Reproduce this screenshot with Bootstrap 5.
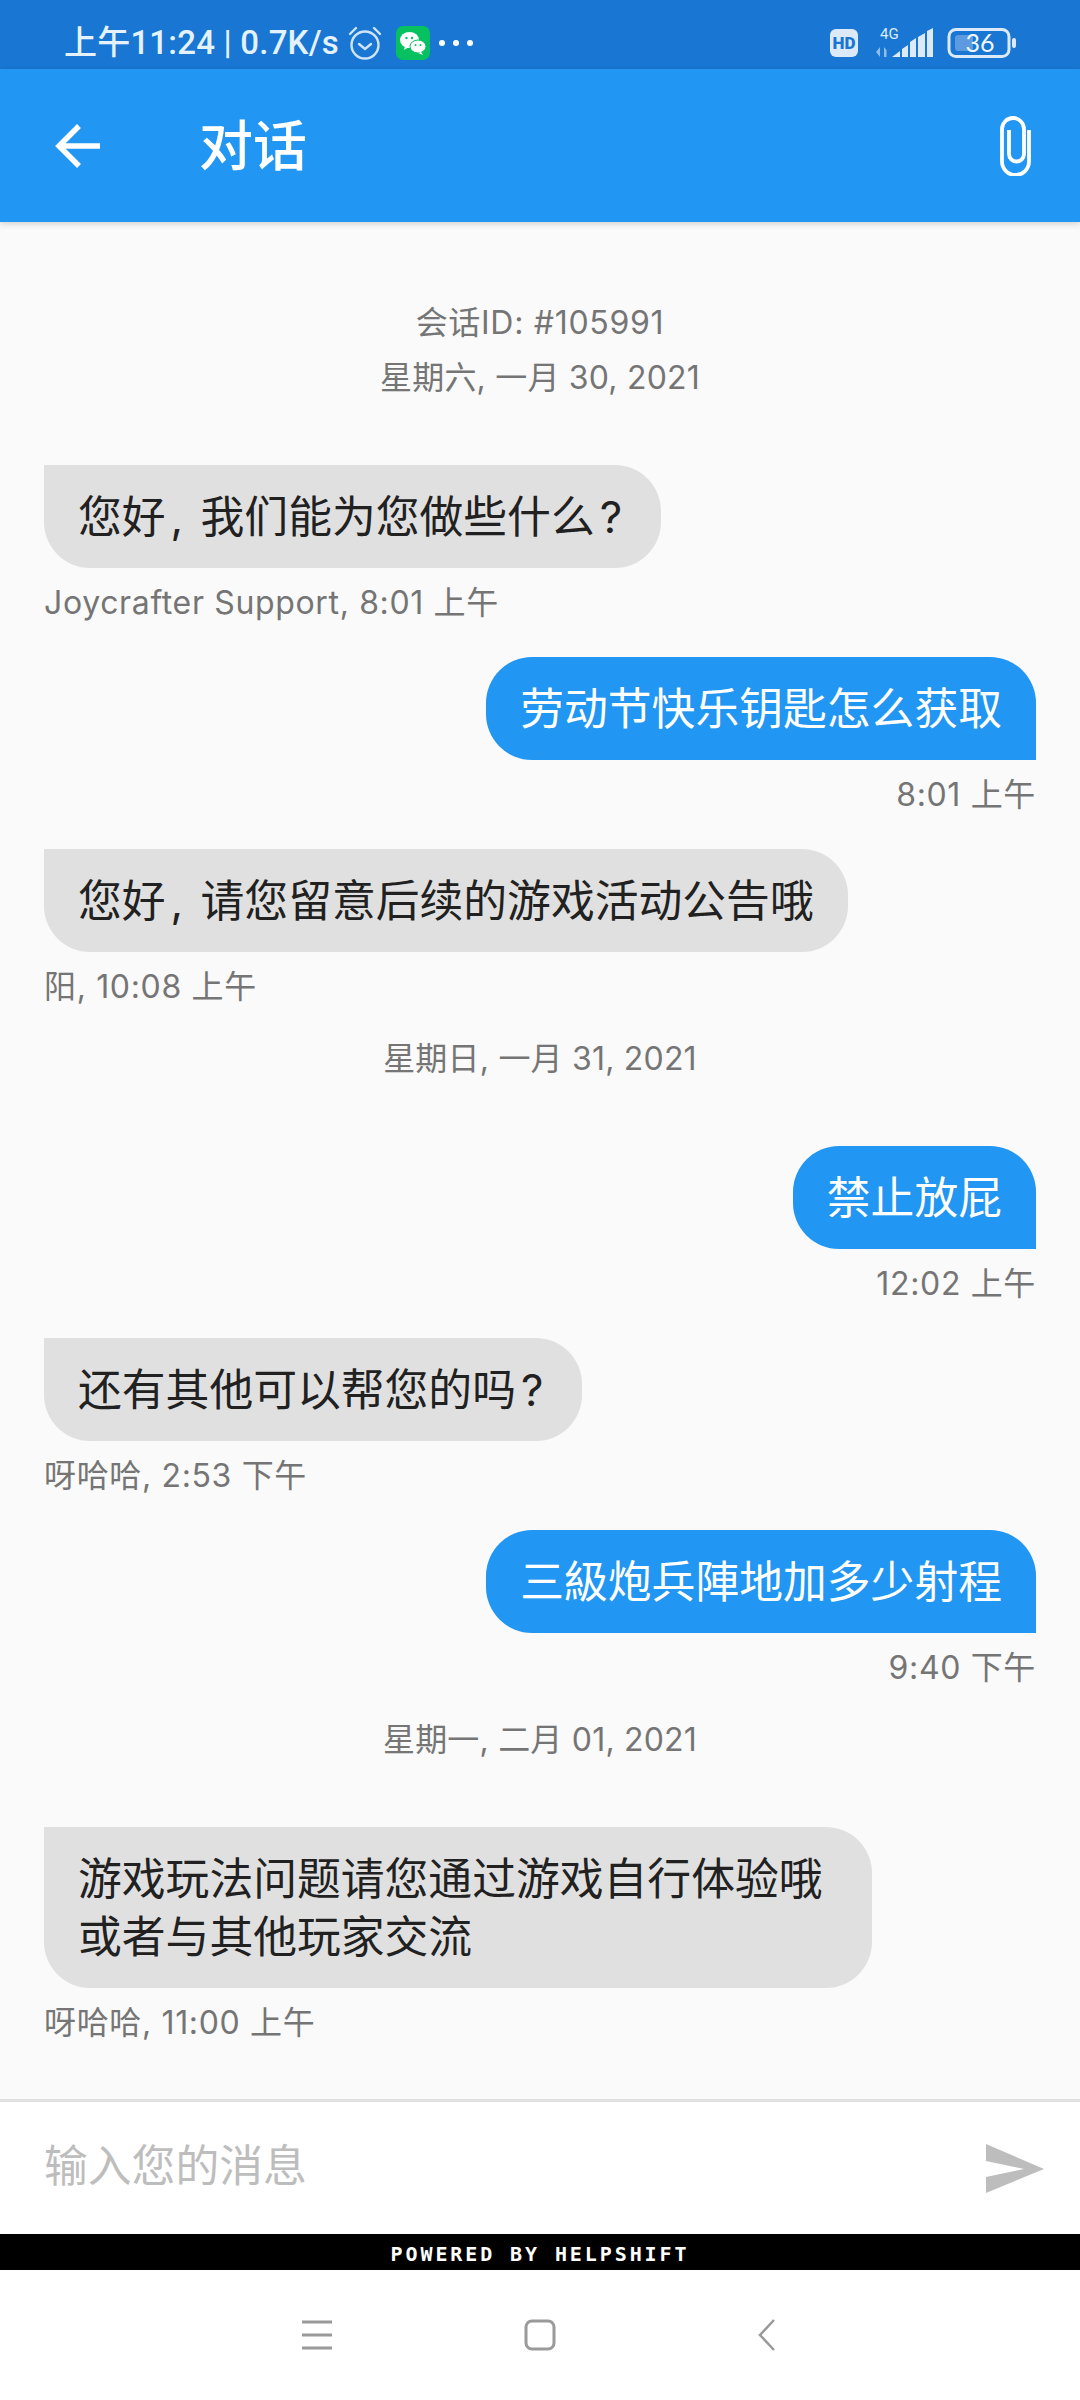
<!DOCTYPE html>
<html lang="zh">
<head>
    <meta charset="UTF-8">
    <meta name="viewport" content="width=device-width, initial-scale=1.0">
    <title>对话</title>
    <link href="https://cdn.jsdelivr.net/npm/bootstrap@5.3.0/dist/css/bootstrap.min.css" rel="stylesheet">
    <style>
        body {
            height: 2400px;
            overflow: hidden;
            background: #fafafa;
            font-family: "Inter", "Noto Sans CJK SC", sans-serif;
        }
        .status-strip {
            height: 69px;
            padding: 16px 64px 0;
            background: #1976d2;
            color: #e3f2fd;
        }
        .status-text {
            font-family: "Roboto", "Noto Sans CJK SC", sans-serif;
            font-size: 33px;
            font-weight: 500;
            line-height: 1;
            letter-spacing: .2px;
            white-space: nowrap;
        }
        .status-wechat { margin-left: 13px; }
        .app-toolbar {
            height: 153px;
            padding: 0 49px 0 55px;
            background: #2196f3;
            color: #fff;
            box-shadow: 0 2px 6px rgba(0,0,0,.16);
            position: relative;
        }
        .app-title { margin: 3px 0 0 99px; font-size: 54px; font-weight: 500; line-height: 1; }
        .chat-scroll { padding: 79px 44px 0; overflow: hidden; }
        .center-note {
            height: 40px;
            font-size: 32px;
            line-height: 43px;
            letter-spacing: .2px;
            color: #757575;
            text-align: center;
        }
        .note-session { margin-bottom: 15px; letter-spacing: .7px; }
        .note-date { margin-top: -4px; margin-bottom: 69px; }
        .note-session + .note-date { margin-top: 0; }
        .msg-bubble {
            padding: 24px 34px 21px;
            max-width: 828px;
            font-size: 43.8px;
            line-height: 58px;
            border-radius: 46px;
        }
        .msg-in { background: #e0e0e0; color: #212121; border-top-left-radius: 0; }
        .msg-out { background: #2196f3; color: #fff; border-bottom-right-radius: 0; }
        .msg-punct { margin: 0 5px; }
        .msg-meta {
            height: 40px;
            margin-top: 13px;
            margin-bottom: 36px;
            font-size: 32px;
            line-height: 43px;
            letter-spacing: .65px;
            color: #757575;
        }
        .composer { height: 135px; padding: 0 36px 0 44px; background: #fff; border-top: 3px solid #e0e0e0; }
        .composer-input.form-control {
            padding: 0 0 3px;
            font-size: 43.8px;
            line-height: 58px;
            background: transparent;
            box-shadow: none;
        }
        .composer-input::placeholder { color: #bdbdbd; opacity: 1; }
        .helpshift-strip {
            height: 36px;
            padding-top: 7px;
            background: #000;
            color: #fff;
            font-family: "DejaVu Sans Mono", monospace;
            font-size: 20px;
            font-weight: 700;
            line-height: 26px;
            letter-spacing: 2.9px;
        }
        .sys-nav { height: 130px; padding-right: 4px; background: #fff; }
        .nav-home-icon { margin: 0 202px 0 192px; }
    </style>
</head>
<body class="d-flex flex-column">
    <!-- status bar -->
    <div class="status-strip d-flex align-items-center flex-shrink-0">
        <span class="status-text">上午11:24 | 0.7K/s</span>
        <svg class="ms-2" width="36" height="36" viewBox="0 0 36 36" fill="none" stroke="#cfe4f8" stroke-width="2.4" stroke-linecap="round">
            <circle cx="18" cy="20" r="13.5"/>
            <path d="M12 19l6 5 6-5"/>
            <path d="M3 9l6-6M33 9l-6-6"/>
        </svg>
        <svg class="status-wechat" width="34" height="34" viewBox="0 0 34 34">
            <rect width="34" height="34" rx="7" fill="#07c160"/>
            <ellipse cx="13.5" cy="14" rx="9.5" ry="8" fill="#fff"/>
            <path d="M9 20l-1 4 5-3z" fill="#fff"/>
            <ellipse cx="22" cy="20.5" rx="8" ry="6.5" fill="#fff" stroke="#07c160"/>
            <path d="M25 26l2 3-5-2z" fill="#fff"/>
            <circle cx="10.5" cy="12" r="1.2" fill="#07c160"/>
            <circle cx="16" cy="12" r="1.2" fill="#07c160"/>
            <circle cx="19.5" cy="19" r="1" fill="#07c160"/>
            <circle cx="24.5" cy="19" r="1" fill="#07c160"/>
        </svg>
        <svg class="ms-2" width="36" height="8" viewBox="0 0 36 8" fill="#fff">
            <circle cx="4" cy="4" r="3"/><circle cx="18" cy="4" r="3"/><circle cx="32" cy="4" r="3"/>
        </svg>

        <svg class="ms-auto" width="186" height="36" viewBox="830 24 186 36">
            <rect x="830" y="28" width="28" height="28" rx="6" fill="#dbe9f8"/>
            <text x="844" y="48" text-anchor="middle" font-family="Roboto, sans-serif" font-size="17" font-weight="900" fill="#1976d2">HD</text>
            <text x="880" y="38" font-family="Roboto, sans-serif" font-size="15" fill="#dbe9f8">4G</text>
            <path d="M880 46v10l-4-5zM884 46v10h2.500v-7z" fill="#8fbde9"/>
            <path d="M892 56l8-6v6zM902 48l6-4v12h-6zM910 41l6-4v19h-6zM918 36l7-4v24h-7zM927 30l6-3v29h-6z" fill="#dbe9f8"/>
            <rect x="949" y="28.500" width="60" height="27" rx="7" fill="none" stroke="#dbe9f8" stroke-width="3"/>
            <rect x="955" y="34" width="18" height="16" rx="3" fill="#5e9ae0"/>
            <text x="980" y="51" text-anchor="middle" font-family="Lato, sans-serif" font-size="25" fill="#eef6fd">36</text>
            <rect x="1012" y="37" width="4" height="10" rx="2" fill="#dbe9f8"/>
        </svg>
    </div>

    <!-- toolbar -->
    <nav class="app-toolbar d-flex align-items-center flex-shrink-0">
        <svg width="45" height="44" viewBox="0 0 45 44" fill="none" stroke="#fff" stroke-width="5.500">
            <path d="M45 22H4M24 2L4 22l20 20"/>
        </svg>
        <h1 class="app-title">对话</h1>
        <svg class="ms-auto" width="31" height="60" viewBox="0 0 31 60" fill="none" stroke="#fff" stroke-width="3.800">
            <path d="M29 14V45.500a13.500 13.500 0 0 1-27 0V13a11 11 0 0 1 22 0V38a7.500 7.500 0 0 1-15 0V14"/>
        </svg>
    </nav>

    <!-- conversation -->
    <main class="chat-scroll flex-grow-1">
        <div class="center-note note-session">会话ID: #105991</div>
        <div class="center-note note-date">星期六, 一月 30, 2021</div>

        <div class="d-flex"><div class="msg-bubble msg-in">您好<span class="msg-punct">,</span> 我们能为您做些什么<span class="msg-punct">?</span></div></div>
        <div class="msg-meta">Joycrafter Support, 8:01 上午</div>

        <div class="d-flex justify-content-end"><div class="msg-bubble msg-out">劳动节快乐钥匙怎么获取</div></div>
        <div class="msg-meta text-end">8:01 上午</div>

        <div class="d-flex"><div class="msg-bubble msg-in">您好<span class="msg-punct">,</span> 请您留意后续的游戏活动公告哦</div></div>
        <div class="msg-meta">阳, 10:08 上午</div>

        <div class="center-note note-date">星期日, 一月 31, 2021</div>

        <div class="d-flex justify-content-end"><div class="msg-bubble msg-out">禁止放屁</div></div>
        <div class="msg-meta text-end">12:02 上午</div>

        <div class="d-flex"><div class="msg-bubble msg-in">还有其他可以帮您的吗<span class="msg-punct">?</span></div></div>
        <div class="msg-meta">呀哈哈, 2:53 下午</div>

        <div class="d-flex justify-content-end"><div class="msg-bubble msg-out">三級炮兵陣地加多少射程</div></div>
        <div class="msg-meta text-end">9:40 下午</div>

        <div class="center-note note-date">星期一, 二月 01, 2021</div>

        <div class="d-flex"><div class="msg-bubble msg-in">游戏玩法问题请您通过游戏自行体验哦或者与其他玩家交流</div></div>
        <div class="msg-meta">呀哈哈, 11:00 上午</div>
    </main>

    <!-- composer -->
    <div class="composer d-flex align-items-center flex-shrink-0">
        <input class="composer-input form-control border-0 rounded-0" type="text" placeholder="输入您的消息">
        <svg class="ms-4 flex-shrink-0" width="58" height="49" viewBox="0 0 58 49" fill="#bdbdbd">
            <path d="M0 0L58 25 0 49V33L38 25 0 17z"/>
        </svg>
    </div>

    <div class="helpshift-strip text-center flex-shrink-0">POWERED BY HELPSHIFT</div>

    <!-- system nav -->
    <div class="sys-nav d-flex align-items-center justify-content-center flex-shrink-0">
        <svg width="30" height="30" viewBox="0 0 30 30" fill="none" stroke="#9a9a9a" stroke-width="3">
            <path d="M0 2h30M0 15h30M0 28h30"/>
        </svg>
        <svg class="nav-home-icon" width="32" height="32" viewBox="0 0 32 32" fill="none" stroke="#9a9a9a" stroke-width="3">
            <rect x="2" y="2" width="28" height="28" rx="6"/>
        </svg>
        <svg width="17" height="32" viewBox="0 0 17 32" fill="none" stroke="#9a9a9a" stroke-width="2.500">
            <path d="M16 1L2 16l14 15"/>
        </svg>
    </div>

    <script src="https://cdn.jsdelivr.net/npm/bootstrap@5.3.0/dist/js/bootstrap.bundle.min.js"></script>
</body>
</html>
